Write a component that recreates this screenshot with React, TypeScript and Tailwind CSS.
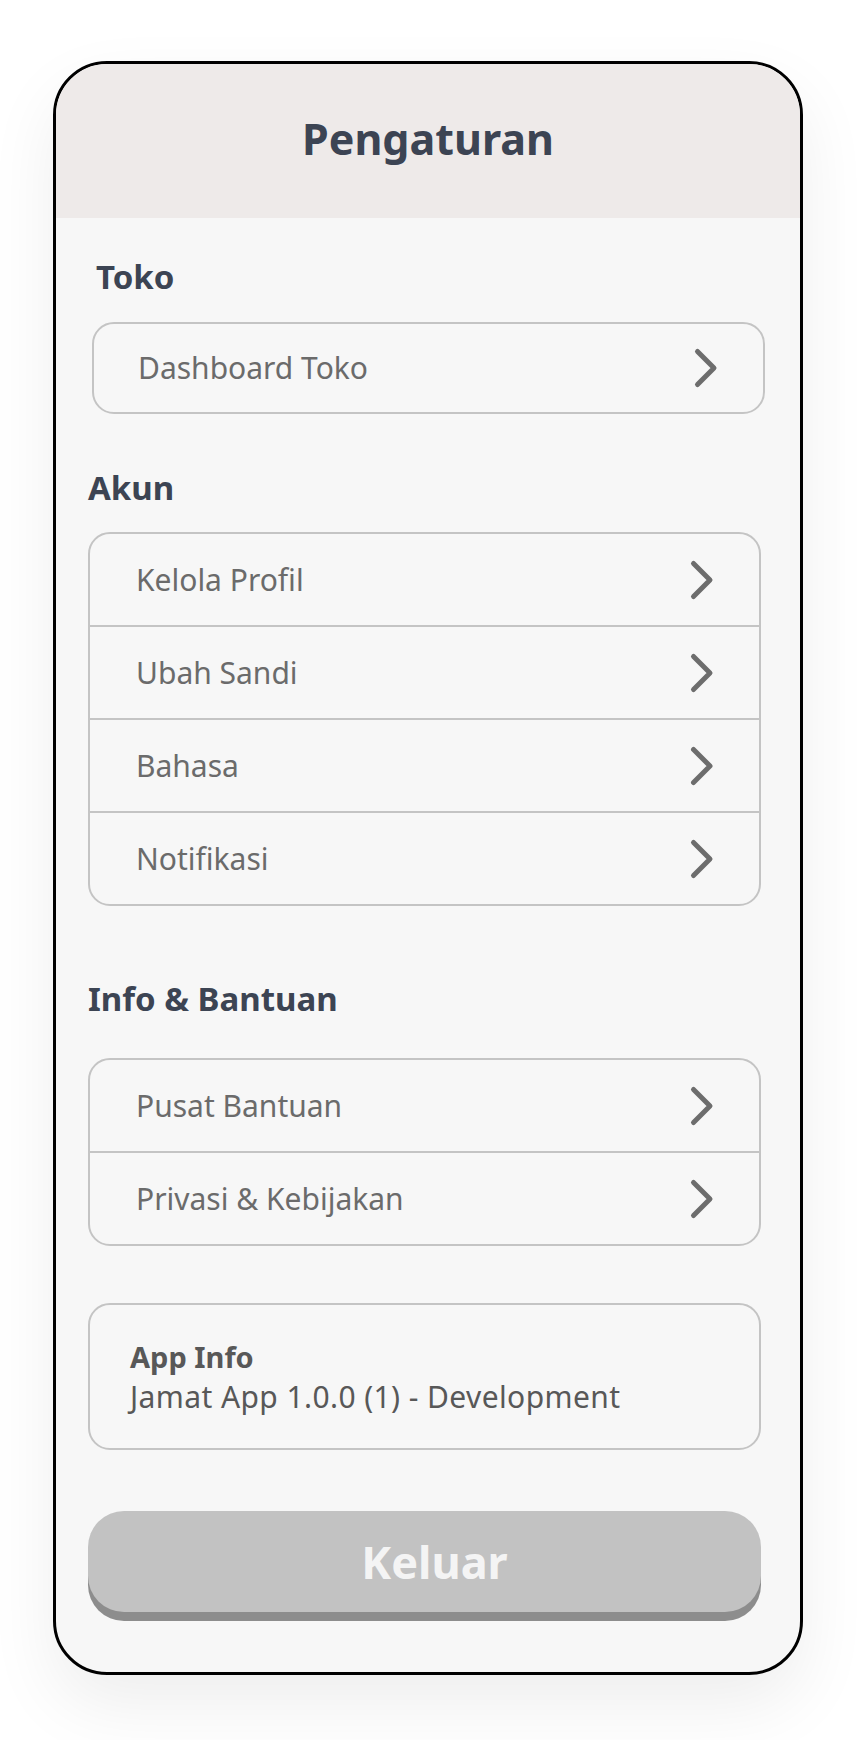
import React from "react";

const font = { fontFamily: '"Noto Sans", "Open Sans", sans-serif' };

function Chevron() {
  return (
    <svg width="26" height="42" viewBox="0 0 26 42" fill="none" className="shrink-0">
      <path d="M4.5 4.5 L21 21 L4.5 37.5" stroke="#6d6d6d" strokeWidth="5" strokeLinecap="round" strokeLinejoin="round" />
    </svg>
  );
}

function Row({ label, last }: { label: string; last?: boolean }) {
  return (
    <div className={"flex items-center justify-between pl-[46px] pr-[44px] " + (last ? "h-[91px]" : "h-[93px] border-b-2 border-[#c4c4c4]")}>
      <span className="text-[30px] leading-none text-[#6b6b6b]">{label}</span>
      <Chevron />
    </div>
  );
}

export default function App() {
  return (
    <div className="min-h-[1740px] w-full bg-white pl-[53px] pt-[61px]" style={font}>
      <div className="flex h-[1614px] w-[750px] flex-col overflow-hidden rounded-[54px] border-[3px] border-black bg-[#f7f7f7] shadow-[0_30px_70px_rgba(0,0,0,0.07)]">
        <header className="flex h-[154px] shrink-0 items-center justify-center bg-[#eeeae9] pb-[6px]">
          <h1 className="text-[43px] font-bold leading-none text-[#3c4453]">Pengaturan</h1>
        </header>

        <div className="flex flex-col pl-[32px] pr-[39px]">
          <div className="ml-[4px] mr-[-4px]">
            <h2 className="mt-[39px] h-[40px] pl-[4px] text-[33px] font-bold leading-[40px] text-[#3c4453]">Toko</h2>
            <div className="mt-[25px] flex h-[92px] items-center justify-between rounded-[22px] border-2 border-[#c4c4c4] pl-[44px] pr-[44px]">
              <span className="text-[30px] leading-none text-[#6b6b6b]">Dashboard Toko</span>
              <Chevron />
            </div>
          </div>

          <h2 className="mt-[54px] h-[40px] text-[33px] font-bold leading-[40px] text-[#3c4453]">Akun</h2>
          <div className="mt-[24px] overflow-hidden rounded-[22px] border-2 border-[#c4c4c4]">
            <Row label="Kelola Profil" />
            <Row label="Ubah Sandi" />
            <Row label="Bahasa" />
            <Row label="Notifikasi" last />
          </div>

          <h2 className="mt-[73px] h-[40px] text-[33px] font-bold leading-[40px] text-[#3c4453]">Info &amp; Bantuan</h2>
          <div className="mt-[39px] overflow-hidden rounded-[22px] border-2 border-[#c4c4c4]">
            <Row label="Pusat Bantuan" />
            <Row label="Privasi & Kebijakan" last />
          </div>

          <div className="mt-[57px] flex h-[147px] flex-col justify-center rounded-[22px] border-2 border-[#c4c4c4] pl-[40px]">
            <span className="text-[29px] font-bold leading-[40px] text-[#585858]">App Info</span>
            <span className="text-[30px] leading-[40px] tracking-[0.4px] text-[#585858]">Jamat App 1.0.0 (1) - Development</span>
          </div>

          <button className="mt-[61px] flex h-[101px] items-center justify-center rounded-[36px] bg-[#c2c2c2] pl-[20px] shadow-[0_9px_0_#8d8d8d]">
            <span className="text-[45px] font-bold leading-none text-[#f4f4f4]">Keluar</span>
          </button>
        </div>
      </div>
    </div>
  );
}
